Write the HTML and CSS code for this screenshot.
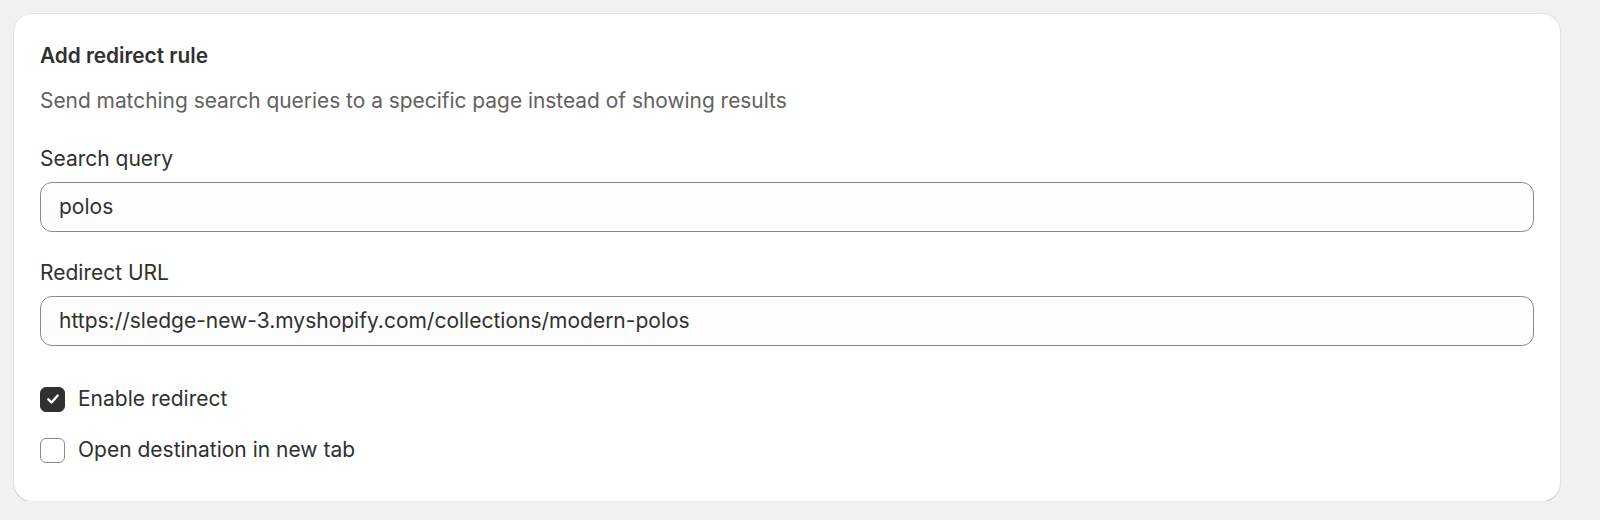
FILE: index.html
```html
<!DOCTYPE html>
<html lang="en">
<head>
<meta charset="utf-8">
<title>Add redirect rule</title>
<link rel="stylesheet" href="styles.css">
</head>
<body>
  <section class="card">
    <h2 class="title">Add redirect rule</h2>
    <p class="subtitle">Send matching search queries to a specific page instead of showing results</p>

    <div class="field">
      <label class="label" for="q">Search query</label>
      <div class="input"><span id="q">polos</span></div>
    </div>

    <div class="field">
      <label class="label" for="u">Redirect URL</label>
      <div class="input"><span id="u">https://sledge-new-3.myshopify.com/collections/modern-polos</span></div>
    </div>

    <div class="checks">
      <div class="check">
        <span class="box box-on">
          <svg viewBox="0 0 16 16" width="18" height="18"><path d="M3.8 8.3 L6.7 11.1 L12.2 4.9" fill="none" stroke="#fff" stroke-width="2.1" stroke-linecap="round" stroke-linejoin="round"/></svg>
        </span>
        <span class="check-text">Enable redirect</span>
      </div>
      <div class="check">
        <span class="box"></span>
        <span class="check-text">Open destination in new tab</span>
      </div>
    </div>
  </section>
</body>
</html>
```

FILE: styles.css
```css
* { box-sizing: border-box; }

html, body {
  margin: 0;
  padding: 0;
  background: #f1f1f1;
}

body {
  padding: 14px 40px 0 14px;
  font-family: Inter, "Noto Sans", sans-serif;
  color: #303030;
  font-size: 21px;
  line-height: 28px;
}

.card {
  width: 1546px;
  background: #ffffff;
  border-radius: 18px;
  padding: 28px 26px 37px 26px;
  box-shadow: 0 0 0 1px rgba(0,0,0,0.06), 0 1px 1px rgba(0,0,0,0.12);
}

.title {
  margin: 0;
  font-size: 20.8px;
  line-height: 28px;
  font-weight: 600;
  color: #303030;
}

.subtitle {
  margin: 17px 0 0 0;
  font-size: 20.9px;
  color: #616161;
}

.field {
  margin-top: 30px;
  display: flex;
  flex-direction: column;
  gap: 9px;
}

.field + .field {
  margin-top: 27px;
}

.label {
  display: block;
  color: #303030;
}

.input {
  height: 50px;
  border: 1.5px solid #8a8a8a;
  border-radius: 12px;
  background: #fdfdfd;
  padding: 0 18px;
  display: flex;
  align-items: center;
  color: #303030;
}

.checks {
  margin-top: 39px;
  display: flex;
  flex-direction: column;
  gap: 23px;
}

.check {
  display: flex;
  align-items: center;
  gap: 13px;
  height: 28px;
}

.box {
  width: 25px;
  height: 25px;
  border-radius: 6px;
  border: 1.5px solid #8a8a8a;
  background: #fff;
  display: flex;
  align-items: center;
  justify-content: center;
  flex: none;
}

.box-on {
  background: #303030;
  border-color: #303030;
}

.box svg { display: block; }
```
